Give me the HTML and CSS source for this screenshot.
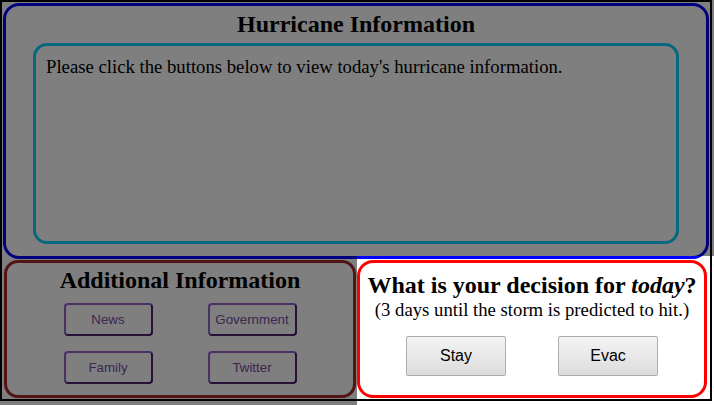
FILE: index.html
```html
<!DOCTYPE html>
<html lang="en">
<head>
<meta charset="utf-8">
<title>Hurricane Information</title>
<link rel="stylesheet" href="styles.css">
</head>
<body>
<div class="page">
  <section class="hurricane">
    <h2 class="title">Hurricane Information</h2>
    <div class="info">
      <p class="info-text">Please click the buttons below to view today's hurricane information.</p>
    </div>
  </section>
  <div class="bottom-row">
    <section class="additional">
      <h2 class="title">Additional Information</h2>
      <div class="source-grid">
        <button class="source-btn">News</button>
        <button class="source-btn">Government</button>
        <button class="source-btn">Family</button>
        <button class="source-btn">Twitter</button>
      </div>
    </section>
    <section class="decision">
      <h2 class="decision-title">What is your decision for <em>today</em>?</h2>
      <p class="decision-sub">(3 days until the storm is predicted to hit.)</p>
      <div class="decision-actions">
        <button class="choice-btn">Stay</button>
        <button class="choice-btn">Evac</button>
      </div>
    </section>
  </div>
</div>
<div class="backdrop"></div>
</body>
</html>
```

FILE: styles.css
```css
* { box-sizing: border-box; }

html, body {
  margin: 0;
  padding: 0;
  background: #ffffff;
  font-family: "Liberation Serif", "Times New Roman", serif;
  color: #000;
}

.page {
  width: 712px;
  height: 401px;
  border: 2px solid #000;
  display: flex;
  flex-direction: column;
}

.hurricane {
  margin: 1px 1px 0 1px;
  height: 256px;
  border: 3px solid #0000ff;
  border-radius: 16px;
  padding: 5px 0 0 0;
}

.title {
  margin: 0;
  font-size: 24px;
  line-height: 27px;
  font-weight: bold;
  text-align: center;
}

.info {
  width: 646px;
  height: 201px;
  margin: 5px auto 0 auto;
  border: 3px solid #0cd2ff;
  border-radius: 14px;
  padding: 10px 10px;
}

.info-text {
  margin: 0;
  font-size: 18.72px;
}

.bottom-row {
  display: flex;
  margin-top: 1px;
  padding: 0 3px 0 2px;
}

.additional {
  width: 352px;
  height: 138px;
  border: 3px solid #a52a2a;
  border-radius: 14px;
  padding-top: 4px;
}

.source-grid {
  display: grid;
  grid-template-columns: 89px 89px;
  column-gap: 55px;
  row-gap: 15px;
  justify-content: center;
  margin-top: 9px;
}

.source-btn {
  height: 33px;
  margin: 0;
  padding: 0;
  background: transparent;
  border: 2px solid;
  border-color: #9462c4 #4e2468 #4e2468 #9462c4;
  border-radius: 4px;
  font-family: "Liberation Sans", Arial, sans-serif;
  font-size: 13.333px;
  color: #7a4aa2;
}

.decision {
  width: 350px;
  height: 138px;
  margin-left: 1px;
  background: #fff;
  border: 3px solid #ff0000;
  border-radius: 16px;
  padding-top: 9px;
  text-align: center;
}

.decision-title {
  margin: 0;
  font-size: 24px;
  line-height: 27px;
  font-weight: bold;
}

.decision-sub {
  margin: 0;
  font-size: 18.72px;
  line-height: 21px;
}

.decision-actions {
  display: flex;
  justify-content: center;
  gap: 52px;
  margin-top: 16px;
}

.choice-btn {
  width: 100px;
  height: 40px;
  margin: 0;
  padding: 0;
  border: 1px solid #adadad;
  border-radius: 2px;
  background: linear-gradient(#f4f4f4, #dcdcdc);
  font-family: "Liberation Sans", Arial, sans-serif;
  font-size: 16px;
  color: #000;
}

.backdrop {
  position: fixed;
  inset: 0;
  background: rgba(0, 0, 0, 0.5);
  clip-path: polygon(0 0, 100% 0, 100% 256px, 357px 256px, 357px 100%, 0 100%);
  pointer-events: none;
}
```
